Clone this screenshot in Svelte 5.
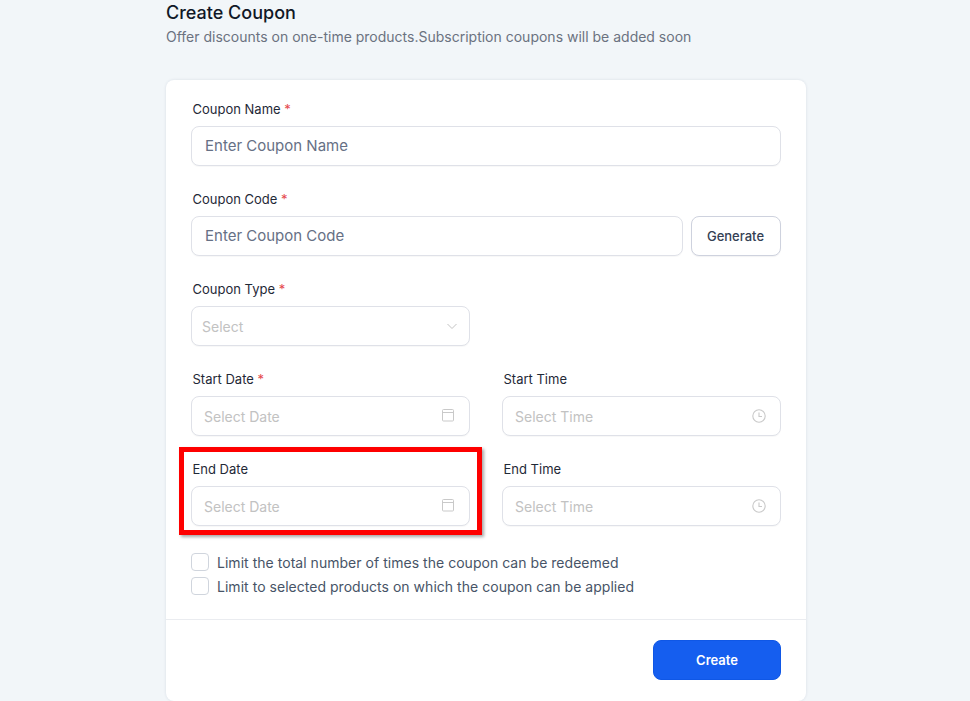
<script>
	const dateFields = [
		{ label: 'Start Date', required: true, placeholder: 'Select Date', icon: 'calendar' },
		{ label: 'Start Time', required: false, placeholder: 'Select Time', icon: 'clock' },
		{ label: 'End Date', required: false, placeholder: 'Select Date', icon: 'calendar' },
		{ label: 'End Time', required: false, placeholder: 'Select Time', icon: 'clock' }
	];
	const limits = [
		'Limit the total number of times the coupon can be redeemed',
		'Limit to selected products on which the coupon can be applied'
	];
</script>

<main class="page">
	<header class="head">
		<h1>Create Coupon</h1>
		<p>Offer discounts on one-time products.Subscription coupons will be added soon</p>
	</header>

	<section class="card">
		<div class="form">
			<div class="field">
				<span class="label">Coupon Name <em>*</em></span>
				<div class="input"><span class="ph">Enter Coupon Name</span></div>
			</div>

			<div class="field">
				<span class="label">Coupon Code <em>*</em></span>
				<div class="code-row">
					<div class="input grow"><span class="ph">Enter Coupon Code</span></div>
					<button class="generate">Generate</button>
				</div>
			</div>

			<div class="grid">
				<div class="field">
					<span class="label">Coupon Type <em>*</em></span>
					<div class="input select">
						<span class="ph light">Select</span>
						<svg width="12" height="12" viewBox="0 0 12 12" fill="none" stroke="#c4c4c4" stroke-width="1">
							<path d="M1.5 4l4.5 4.5L10.5 4" />
						</svg>
					</div>
				</div>
			</div>

			<div class="grid">
				{#each dateFields as f}
					<div class="field">
						<span class="label">{f.label}{#if f.required}&nbsp;<em>*</em>{/if}</span>
						<div class="input date">
							<span class="ph light">{f.placeholder}</span>
							{#if f.icon === 'calendar'}
								<svg width="14" height="14" viewBox="0 0 14 14" fill="none" stroke="#c9c9c9" stroke-width="1">
									<rect x="1.5" y="0.5" width="11" height="11.5" rx="1" />
									<path d="M1.5 3.5h11" />
								</svg>
							{:else}
								<svg width="14" height="14" viewBox="0 0 14 14" fill="none" stroke="#c9c9c9" stroke-width="1.1">
									<circle cx="7" cy="7" r="6.2" />
									<path d="M7 3.5V7.5H10" />
								</svg>
							{/if}
						</div>
					</div>
				{/each}
			</div>

			<div class="limits">
				{#each limits as text}
					<label class="check"><span class="box"></span>{text}</label>
				{/each}
			</div>
		</div>

		<footer class="foot">
			<button class="create">Create</button>
		</footer>
	</section>

	<div class="highlight"></div>
</main>

<style>
	:global(body) {
		background: #f2f6f9;
		font-family: Inter, 'Liberation Sans', sans-serif;
		overflow: hidden;
	}

	.page {
		position: relative;
		height: 701px;
		width: 640px;
		margin-left: 166px;
		padding-top: 2px;
		box-sizing: border-box;
	}

	.head h1 {
		margin: 0;
		font-size: 18px;
		line-height: 22px;
		font-weight: 500;
		color: #111827;
	}

	.head p {
		margin: 3px 0 0;
		font-size: 14px;
		line-height: 20px;
		color: #6b7280;
	}

	.card {
		margin-top: 33px;
		background: #fff;
		border-radius: 8px;
		box-shadow: 0 0 3px rgba(30, 50, 90, 0.12);
	}

	.form {
		display: flex;
		flex-direction: column;
		gap: 24px;
		padding: 20px 25px 23px;
		border-bottom: 1px solid #eaecf0;
	}

	.field {
		display: flex;
		flex-direction: column;
		gap: 7px;
		min-width: 0;
	}

	.label {
		padding-left: 1.5px;
		font-size: 13px;
		line-height: 19px;
		color: #1f2937;
	}

	.label em {
		font-style: normal;
		color: #e5484d;
	}

	.input {
		display: flex;
		align-items: center;
		justify-content: space-between;
		height: 40px;
		box-sizing: border-box;
		padding: 0 13px;
		background: #fff;
		border: 1px solid #dfe1e8;
		border-radius: 8px;
		box-shadow: 0 1px 1px rgba(16, 24, 40, 0.03);
	}

	.grow {
		flex: 1;
	}

	.ph {
		padding-bottom: 1px;
		font-size: 15px;
		color: #667085;
	}

	.ph.light {
		padding-bottom: 0;
		font-size: 14px;
		color: #c2c2c2;
	}

	.select {
		padding: 0 11px 0 10px;
	}

	.date {
		padding: 0 14px 0 12px;
	}

	.code-row {
		display: flex;
		gap: 8px;
	}

	.generate {
		width: 90px;
		height: 40px;
		padding: 0 1px 0 0;
		background: #fff;
		border: 1px solid #ced2de;
		border-radius: 8px;
		box-shadow: 0 1px 1px rgba(16, 24, 40, 0.05);
		font: 500 13px Inter, 'Liberation Sans', sans-serif;
		color: #344054;
	}

	.grid {
		display: grid;
		grid-template-columns: 279px 279px;
		column-gap: 32px;
		row-gap: 24px;
	}

	.limits {
		display: flex;
		flex-direction: column;
		gap: 4px;
		margin-top: 2px;
	}

	.check {
		display: flex;
		align-items: center;
		gap: 8px;
		height: 20px;
		font-size: 14px;
		letter-spacing: 0.03px;
		color: #475467;
	}

	.box {
		width: 16px;
		height: 16px;
		border: 1px solid #d0d5dd;
		border-radius: 4px;
		background: #fff;
	}

	.foot {
		display: flex;
		justify-content: flex-end;
		padding: 20px 25px 21px;
	}

	.create {
		width: 128px;
		height: 40px;
		background: #155eef;
		border: 1px solid #0f57e6;
		border-radius: 8px;
		font: 600 13px Inter, 'Liberation Sans', sans-serif;
		color: #fff;
	}

	/* annotation drawn over the End Date field */
	.highlight {
		position: absolute;
		left: 13px;
		top: 447px;
		width: 303px;
		height: 88px;
		box-sizing: border-box;
		border: 5px solid #fe0000;
		box-shadow: 2px 2px 3px rgba(0, 0, 0, 0.35);
		pointer-events: none;
	}
</style>
